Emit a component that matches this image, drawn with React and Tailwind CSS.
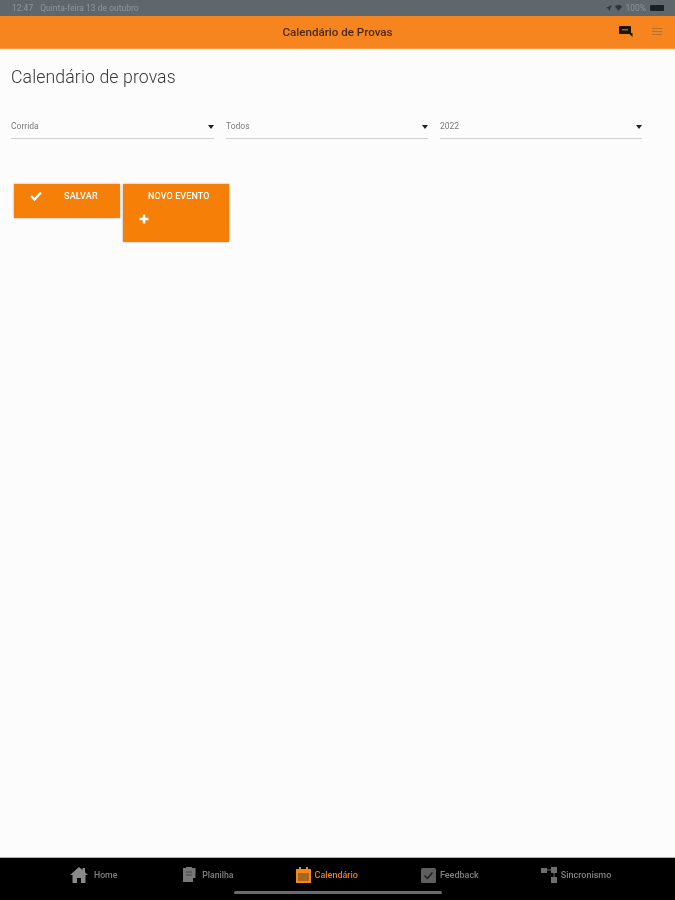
import React from "react";

const font = { fontFamily: "Roboto, 'Liberation Sans', sans-serif" };

function Select({ label, className }) {
  return (
    <div className={`h-[20px] border-b border-[#cfcfcf] flex items-start justify-between ${className}`}>
      <span className="text-[8.5px] leading-[10px] mt-[1.5px] text-[#7a7a7a]">{label}</span>
      <svg width="6" height="4" viewBox="0 0 6 4" className="mt-[6px]"><path d="M0 0h6L3 4z" fill="#222" /></svg>
    </div>
  );
}

function NavItem({ icon, label, active, className, small }) {
  return (
    <div className={`flex items-center ${className}`}>
      {icon}
      <span className={`${small ? "text-[8.7px]" : "text-[9px]"} leading-[12px] mt-[1px] font-medium ${active ? "text-[#e8801f]" : "text-[#808080]"}`}>{label}</span>
    </div>
  );
}

export default function App() {
  return (
    <div className="w-[675px] h-[900px] flex flex-col bg-[#fcfcfc] overflow-hidden blur-[0.4px]" style={font}>
      {/* status bar */}
      <div className="h-[16px] bg-[#5f666c] flex items-center justify-between pl-[12px] pr-[11px] text-[8.5px] text-[#8f969b]">
        <span className="flex gap-[7px]"><span>12:47</span><span>Quinta-feira 13 de outubro</span></span>
        <span className="flex items-center gap-[3px]">
          <svg width="6" height="6" viewBox="0 0 6 6"><path d="M6 0 0 3l2.500.5L3 6z" fill="#2f3437" /></svg>
          <svg width="7" height="6" viewBox="0 0 7 6"><path d="M0 1.500C2-.5 5-.5 7 1.500L3.500 6z" fill="#2f3437" /></svg>
          <span>100%</span>
          <span className="w-[14px] h-[6px] rounded-[1px] bg-[#1d2124] ml-[1px]" />
        </span>
      </div>

      {/* header */}
      <div className="h-[33px] bg-[#f7851f] border-b border-[#fa9a45] flex items-center relative">
        <div className="flex-1 text-center text-[11.6px] leading-[14px] mt-[0.5px] font-medium text-[#4a2a0c]">Calendário de Provas</div>
        <svg width="14" height="12" viewBox="0 0 14 12" className="absolute left-[619px] top-[10px]">
          <path d="M1 0h10a1 1 0 0 1 1 1v6h1.500v4l-3-3H1a1 1 0 0 1-1-1V1a1 1 0 0 1 1-1z" fill="#1c1408" />
          <path d="M3 3h6v1.500H3z" fill="#a8651c" />
        </svg>
        <div className="absolute left-[652px] top-[12px] w-[10px] flex flex-col gap-[2px]">
          <span className="h-px bg-[#b7712f]" /><span className="h-px bg-[#b7712f]" /><span className="h-px bg-[#b7712f]" />
        </div>
      </div>

      {/* content */}
      <div className="flex-1 flex flex-col">
        <h1 className="mt-[17px] ml-[11px] text-[17.7px] leading-[22px] text-[#3a3a3a] font-light tracking-[0.1px]">Calendário de provas</h1>
        <div className="mt-[31px] ml-[11px] flex gap-[12px]">
          <Select label="Corrida" className="w-[203px]" />
          <Select label="Todos" className="w-[202px]" />
          <Select label="2022" className="w-[202px]" />
        </div>
        <div className="mt-[45px] ml-[14px] flex items-start gap-[3px]">
          <div className="w-[106px] h-[34px] bg-[#f57f07] shadow-[0_0_2px_rgba(0,0,0,0.35)] flex items-start text-white">
            <svg width="12" height="10" viewBox="0 0 12 10" className="ml-[16px] mt-[7px]"><path d="M1 5l3.500 3.500L11 1.500" fill="none" stroke="#fff" strokeWidth="2.400" /></svg>
            <span className="ml-[22px] mt-[7px] text-[9px] leading-[10px] font-medium tracking-[0.2px]">SALVAR</span>
          </div>
          <div className="w-[106px] h-[58px] bg-[#f57f07] shadow-[0_0_2px_rgba(0,0,0,0.35)] flex flex-col text-white">
            <span className="mt-[7px] ml-[25px] text-[9px] leading-[10px] font-medium tracking-[0.1px]">NOVO EVENTO</span>
            <svg width="10" height="10" viewBox="0 0 10 10" className="ml-[16px] mt-[13px]"><path d="M5 .5v9M.5 5h9" stroke="#fff" strokeWidth="2.600" /></svg>
          </div>
        </div>
      </div>

      {/* tab bar */}
      <div className="h-[43px] bg-black border-t border-[#b5b5b5] flex flex-col">
        <div className="h-[33px] flex items-center">
          <NavItem small className="ml-[70px] gap-[6px]" label="Home" icon={
            <svg width="18" height="16" viewBox="0 0 18 16"><path d="M9 0 0 8h2.500v8h4.500v-5h4v5h4.500V8H18l-3-2.700V1h-2.500v2.100z" fill="#8a8a8a" /></svg>} />
          <NavItem small className="ml-[66px] gap-[6px]" label="Planilha" icon={
            <svg width="13" height="16" viewBox="0 0 13 16"><path d="M0 1h3V0h6v1h3.500v10H10v4H0z" fill="#777" /><path d="M3 5h6M3 8h6" stroke="#444" /></svg>} />
          <NavItem className="ml-[62px] gap-[4px]" label="Calendário" active icon={
            <svg width="15" height="16" viewBox="0 0 15 16"><path d="M0 2h3V0h2v2h5V0h2v2h3v14H0z" fill="#f08a20" /><path d="M2 6h11v8H2z" fill="#a8651c" /></svg>} />
          <NavItem className="ml-[63px] gap-[4px]" label="Feedback" icon={
            <svg width="15" height="16" viewBox="0 0 15 16"><rect y="1" width="15" height="15" rx="1.500" fill="#5f5f5f" /><path d="M3.500 8.500l3 3 5-6" fill="none" stroke="#1c1c1c" strokeWidth="1.500" /></svg>} />
          <NavItem className="ml-[62px] gap-[4px]" label="Sincronismo" icon={
            <svg width="16" height="16" viewBox="0 0 16 16"><path d="M0 1h6v5H0zM10 0h6v6h-6zM10 10h6v6h-6z" fill="#6f6f6f" /><path d="M6 3h4M13 6v4" stroke="#6f6f6f" /></svg>} />
        </div>
        <div className="w-[208px] h-[3px] rounded-full bg-[#6b6b6b] ml-[234px]" />
      </div>
    </div>
  );
}
